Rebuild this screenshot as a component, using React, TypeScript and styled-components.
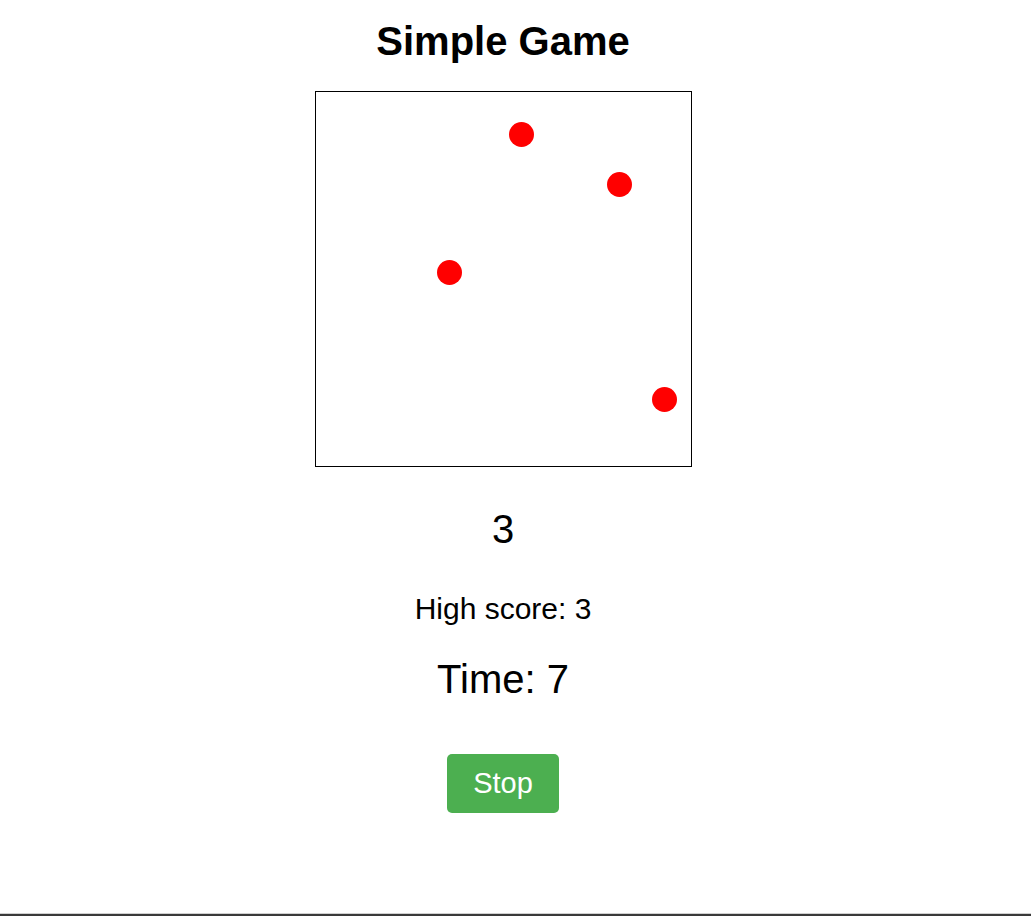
import React from "react";
import styled, { createGlobalStyle } from "styled-components";

const GlobalStyle = createGlobalStyle`
  html, body {
    margin: 0;
    padding: 0;
    background: #ffffff;
    font-family: "Liberation Sans", Arial, sans-serif;
    color: #000;
  }
`;

const Page = styled.div`
  width: 1031px;
  height: 916px;
  display: flex;
  flex-direction: column;
  overflow: hidden;
`;

const Main = styled.main`
  width: 1006px;
  height: 913px;
  display: flex;
  flex-direction: column;
  align-items: center;
`;

const Title = styled.h1`
  margin: 18px 0 0;
  font-size: 40px;
  line-height: 46px;
  font-weight: 700;
`;

const Board = styled.div`
  position: relative;
  margin-top: 27px;
  width: 375px;
  height: 374px;
  border: 1px solid #000;
  background: #fff;
`;

const Dot = styled.div`
  position: absolute;
  width: 25px;
  height: 25px;
  border-radius: 50%;
  background: #ff0000;
`;

const Score = styled.div`
  margin-top: 39px;
  font-size: 40px;
  line-height: 46px;
`;

const HighScore = styled.div`
  margin-top: 40px;
  font-size: 30px;
  line-height: 34px;
`;

const Timer = styled.div`
  margin-top: 30px;
  font-size: 40px;
  line-height: 46px;
`;

const Button = styled.button`
  margin-top: 52px;
  padding: 13px 26px 13px;
  border: none;
  border-radius: 5px;
  background: #4caf50;
  color: #fff;
  font-family: "Liberation Sans", Arial, sans-serif;
  font-size: 29px;
  line-height: 33px;
  cursor: pointer;
`;

const Rule = styled.div`
  width: 100%;
  height: 2px;
  border-top: 1px solid #d0d0d0;
  background: #3a3a3a;
`;

const dots = [
  { left: 193, top: 30 },
  { left: 291, top: 80 },
  { left: 121, top: 168 },
  { left: 336, top: 295 },
];

export default function App() {
  return (
    <Page>
      <GlobalStyle />
      <Main>
        <Title>Simple Game</Title>
        <Board>
          {dots.map((d, i) => (
            <Dot key={i} style={{ left: d.left, top: d.top }} />
          ))}
        </Board>
        <Score>3</Score>
        <HighScore>High score: 3</HighScore>
        <Timer>Time: 7</Timer>
        <Button>Stop</Button>
      </Main>
      <Rule />
    </Page>
  );
}
